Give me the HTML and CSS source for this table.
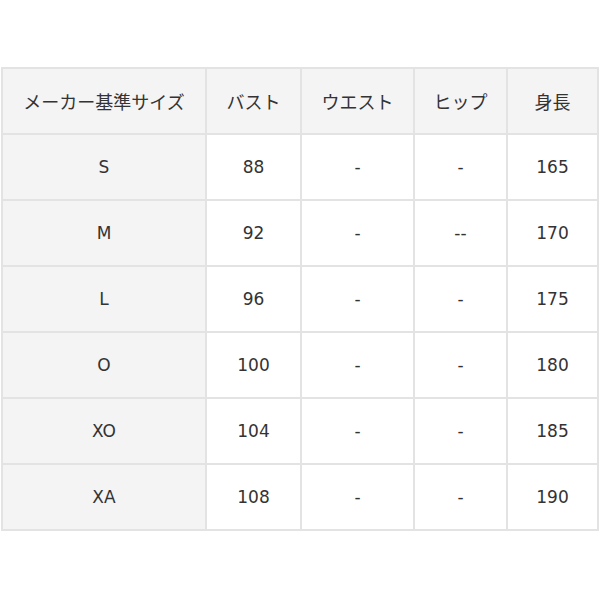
FILE: index.html
```html
<!DOCTYPE html>
<html lang="ja">
<head>
<meta charset="utf-8">
<link rel="stylesheet" href="styles.css">
</head>
<body>
<div class="wrap">
<table class="size-table">
  <colgroup>
    <col class="c1"><col class="c2"><col class="c3"><col class="c4"><col class="c5">
  </colgroup>
  <thead>
    <tr><th>メーカー基準サイズ</th><th>バスト</th><th>ウエスト</th><th>ヒップ</th><th>身長</th></tr>
  </thead>
  <tbody>
    <tr><th>S</th><td>88</td><td>-</td><td>-</td><td>165</td></tr>
    <tr><th>M</th><td>92</td><td>-</td><td>--</td><td>170</td></tr>
    <tr><th>L</th><td>96</td><td>-</td><td>-</td><td>175</td></tr>
    <tr><th>O</th><td>100</td><td>-</td><td>-</td><td>180</td></tr>
    <tr><th>XO</th><td>104</td><td>-</td><td>-</td><td>185</td></tr>
    <tr><th>XA</th><td>108</td><td>-</td><td>-</td><td>190</td></tr>
  </tbody>
</table>
</div>
</body>
</html>
```
FILE: styles.css
```css
html, body {
  margin: 0;
  padding: 0;
  background: #ffffff;
}
.wrap {
  padding: 67px 3px 0 1px;
}
.size-table {
  border-collapse: collapse;
  width: 596px;
  table-layout: fixed;
  font-family: "DejaVu Sans", "Noto Sans CJK JP", sans-serif;
  font-size: 17px;
  color: #333333;
}
.c1 { width: 204px; }
.c2 { width: 95px; }
.c3 { width: 113px; }
.c4 { width: 93px; }
.c5 { width: 91px; }
.size-table th,
.size-table td {
  border: 2px solid #e3e3e3;
  height: 64px;
  padding: 0;
  text-align: center;
  vertical-align: middle;
  font-weight: normal;
}
.size-table thead th {
  background: #f4f4f4;
  font-family: "Noto Sans CJK JP", sans-serif;
  font-size: 18px;
  height: 64px;
}
.size-table tbody th {
  background: #f4f4f4;
}
.size-table td {
  background: #ffffff;
}
```
